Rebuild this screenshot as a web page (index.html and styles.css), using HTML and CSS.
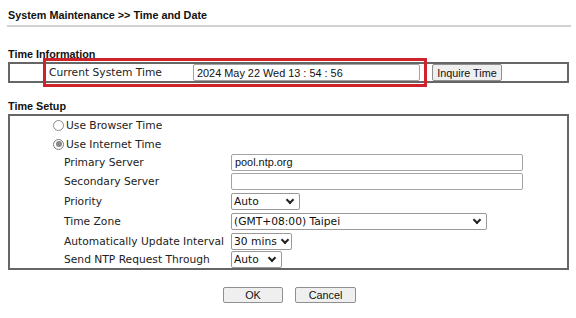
FILE: index.html
```html
<!DOCTYPE html>
<html lang="en">
<head>
    <meta charset="UTF-8">
    <meta name="viewport" content="width=device-width, initial-scale=1.0">
    <title>Time and Date</title>
    <link rel="stylesheet" href="styles.css">
</head>
<body>
    <div class="page">
        <div class="title">System Maintenance &gt;&gt; Time and Date</div>

        <div class="section-title info-title">Time Information</div>
        <div class="box info-box">
            <span class="label">Current System Time</span>
            <input class="text-input time-input" type="text" value="2024 May 22 Wed 13 : 54 : 56">
            <button class="btn inquire">Inquire Time</button>
            <div class="highlight"></div>
        </div>

        <div class="section-title setup-title">Time Setup</div>
        <div class="box setup-box">
            <div class="row radio-row">
                <span class="radio"></span><span class="label">Use Browser Time</span>
            </div>
            <div class="row radio-row">
                <span class="radio checked"></span><span class="label">Use Internet Time</span>
            </div>
            <div class="row">
                <span class="label field-label">Primary Server</span>
                <input class="text-input server-input" type="text" value="pool.ntp.org">
            </div>
            <div class="row">
                <span class="label field-label">Secondary Server</span>
                <input class="text-input server-input" type="text" value="">
            </div>
            <div class="row">
                <span class="label field-label">Priority</span>
                <span class="select-wrap sel-priority"><select class="select"><option>Auto</option></select></span>
            </div>
            <div class="row">
                <span class="label field-label">Time Zone</span>
                <span class="select-wrap sel-zone"><select class="select"><option>(GMT+08:00) Taipei</option></select></span>
            </div>
            <div class="row">
                <span class="label field-label">Automatically Update Interval</span>
                <span class="select-wrap sel-interval"><select class="select"><option>30 mins</option></select></span>
            </div>
            <div class="row">
                <span class="label field-label">Send NTP Request Through</span>
                <span class="select-wrap sel-through"><select class="select"><option>Auto</option></select></span>
            </div>
        </div>

        <div class="actions">
            <button class="btn action-btn">OK</button>
            <button class="btn action-btn cancel">Cancel</button>
        </div>
    </div>
</body>
</html>
```

FILE: styles.css
```css
body {
    margin: 0;
    background: #fff;
    font-family: "Liberation Sans", Arial, sans-serif;
    color: #111;
}
.page {
    width: 561px;
    padding: 0 7px 0 8px;
}
.title {
    font-weight: bold;
    font-size: 10.8px;
    line-height: 14px;
    padding-top: 8px;
    padding-bottom: 3px;
    border-bottom: 2px solid #d2d2d2;
    margin-left: -1px;
    padding-left: 1px;
    margin-right: -2px;
}
.section-title {
    font-weight: bold;
    font-size: 10.8px;
    line-height: 14px;
}
.info-title {
    margin-top: 20px;
    height: 15px;
}
.setup-title {
    margin-top: 16px;
    height: 15px;
}
.box {
    border: 2px solid #666;
    box-sizing: border-box;
}
.label {
    font-family: "DejaVu Sans", Verdana, sans-serif;
    font-size: 10.7px;
    color: #222;
    white-space: nowrap;
}
.info-box {
    position: relative;
    height: 21px;
    display: flex;
    align-items: center;
    padding-left: 39px;
}
.info-box .label {
    width: 144px;
}
.text-input {
    box-sizing: border-box;
    height: 17px;
    border: 1px solid #a3a3a3;
    border-radius: 2px;
    padding: 0 3px;
    margin: 0;
    font-family: "Liberation Sans", Arial, sans-serif;
    font-size: 10.9px;
    color: #111;
    background: #fff;
    outline: none;
}
.time-input {
    width: 227px;
}
.btn {
    box-sizing: border-box;
    margin: 0;
    padding: 0;
    background: #efefef;
    border: 1px solid #8f8f8f;
    border-radius: 2px;
    font-family: "Liberation Sans", Arial, sans-serif;
    font-size: 10.8px;
    color: #111;
}
.inquire {
    width: 70px;
    height: 17px;
    margin-left: 12px;
}
.highlight {
    position: absolute;
    left: 33px;
    top: -6px;
    width: 384px;
    height: 29px;
    box-sizing: border-box;
    border: 3px solid #d0222b;
}
.setup-box {
    height: 156px;
    display: grid;
    grid-template-rows: 19px 18px 18px 20px 21px 19px 20px 17px;
}
.row {
    display: flex;
    align-items: center;
    padding-left: 54px;
}
.radio-row {
    padding-left: 43px;
}
.radio {
    box-sizing: border-box;
    width: 11px;
    height: 11px;
    border: 1px solid #8a8a8a;
    border-radius: 50%;
    margin-right: 2px;
    background: #fff;
    position: relative;
}
.radio.checked {
    border-color: #7a7a7a;
}
.radio.checked::after {
    content: "";
    position: absolute;
    left: 1.5px;
    top: 1.5px;
    width: 6px;
    height: 6px;
    border-radius: 50%;
    background: #8a8a8a;
}
.field-label {
    width: 167px;
}
.server-input {
    width: 292px;
}
.select-wrap {
    position: relative;
    display: block;
    height: 17px;
}
.select-wrap::after {
    content: "";
    position: absolute;
    right: 7px;
    top: 4px;
    width: 4px;
    height: 4px;
    border-right: 2px solid #222;
    border-bottom: 2px solid #222;
    transform: rotate(45deg);
    pointer-events: none;
}
.select {
    appearance: none;
    -webkit-appearance: none;
    box-sizing: border-box;
    display: block;
    width: 100%;
    height: 17px;
    margin: 0;
    padding: 0 0 0 2px;
    border: 1px solid #999;
    border-radius: 2px;
    background: #fff;
    font-family: "DejaVu Sans", Verdana, sans-serif;
    font-size: 10.7px;
    line-height: 15px;
    color: #111;
}
.sel-priority {
    width: 69px;
}
.sel-zone {
    width: 256px;
}
.sel-interval {
    width: 61px;
}
.sel-interval::after {
    right: 4px;
}
.sel-through {
    width: 51px;
}
.actions {
    display: flex;
    justify-content: center;
    gap: 12px;
    margin-top: 17px;
    padding-left: 2px;
}
.action-btn {
    width: 60px;
    height: 16px;
}
.cancel {
    width: 61px;
}
```
